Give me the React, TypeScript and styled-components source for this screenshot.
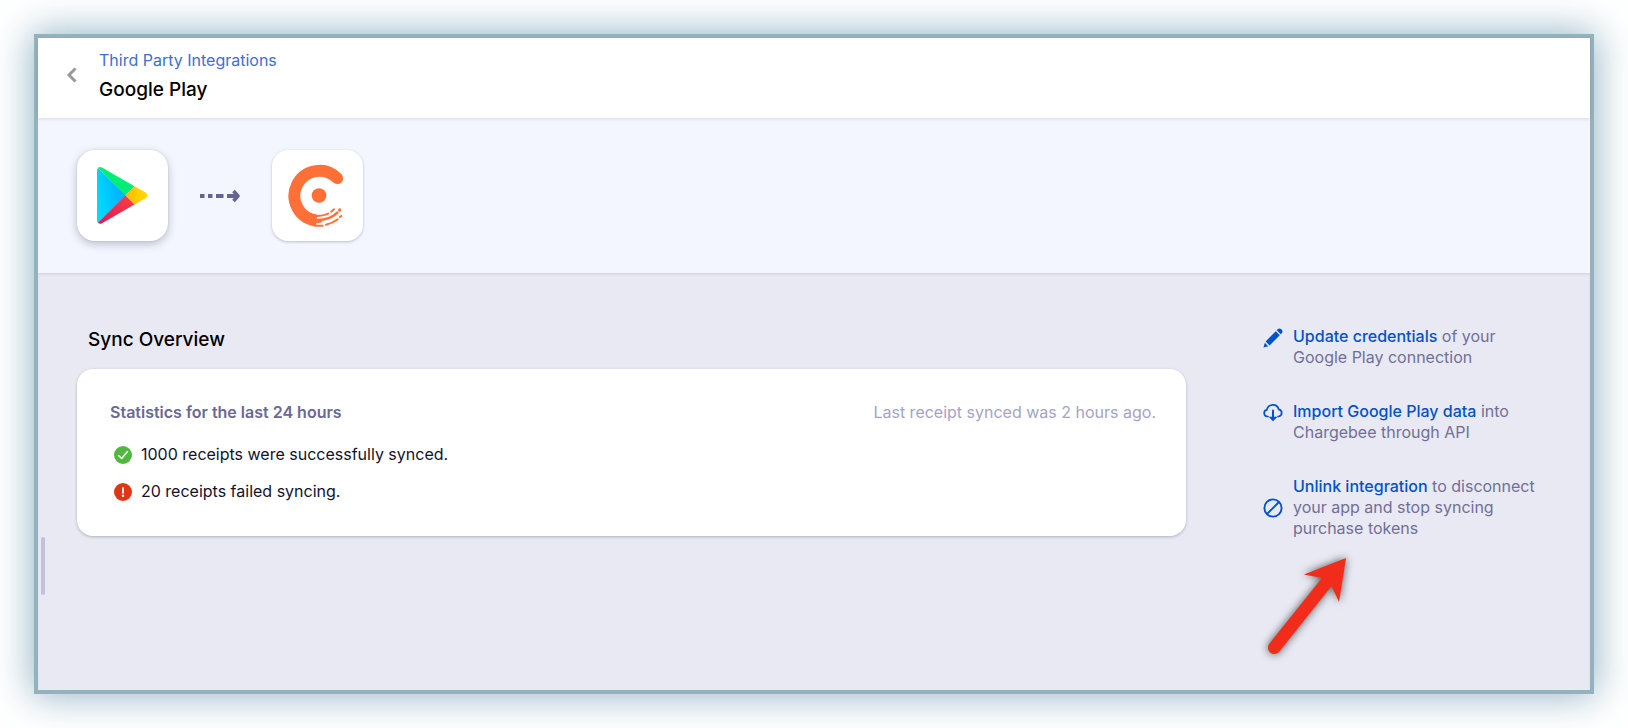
import React from "react";
import styled, { createGlobalStyle } from "styled-components";

const GlobalStyle = createGlobalStyle`
  * { box-sizing: border-box; }
  body {
    margin: 0;
    background: #fff;
    font-family: Inter, "Liberation Sans", sans-serif;
    font-size: 16px;
    color: #12122b;
  }
  h1, h2, h3, p, ul { margin: 0; padding: 0; }
  ul { list-style: none; }
  a { text-decoration: none; }
  svg { display: block; flex: none; }
`;

const Page = styled.div`
  display: flex;
  min-height: 100vh;
  padding: 34px;
`;

const Frame = styled.main`
  position: relative;
  flex: 1;
  display: flex;
  flex-direction: column;
  border: 4px solid #94b1bf;
  box-shadow: 0 0 36px 2px rgba(104, 148, 173, 0.7);
`;

const Header = styled.header`
  position: relative;
  display: flex;
  align-items: center;
  gap: 20px;
  height: 80px;
  padding: 0 28px 6px;
  background: #fff;
  box-shadow: 0 1px 3px rgba(60, 70, 100, 0.16);
`;

const BackButton = styled.button`
  display: flex;
  padding: 0;
  border: 0;
  background: none;
`;

const Titles = styled.div`
  display: flex;
  flex-direction: column;
  gap: 6px;
`;

const Crumb = styled.a`
  line-height: 24px;
  color: #426dd1;
`;

const Title = styled.h1`
  font-size: 19px;
  line-height: 24px;
  font-weight: 500;
  color: #000;
`;

const Banner = styled.section`
  display: flex;
  align-items: center;
  gap: 32px;
  height: 155px;
  padding: 0 39px;
  background: #f3f6fe;
`;

const LogoTile = styled.div<{ $raised?: boolean }>`
  display: flex;
  align-items: center;
  justify-content: center;
  width: 91px;
  height: 91px;
  border-radius: ${(p) => (p.$raised ? 18 : 16)}px;
  background: #fff;
  box-shadow: ${(p) =>
    p.$raised
      ? "0 3px 8px rgba(40, 45, 75, 0.28), 0 0 2px rgba(40, 45, 75, 0.12)"
      : "0 1px 3px rgba(40, 45, 75, 0.28)"};
`;

const Content = styled.div`
  flex: 1;
  display: flex;
  gap: 77px;
  padding: 53px 48px 40px 39px;
  background: #e9e9f3;
  box-shadow: inset 0 2px 3px -1px rgba(60, 60, 90, 0.14);
`;

const Overview = styled.section`
  flex: 1;
`;

const SectionTitle = styled.h2`
  padding: 2px 11px 17px;
  font-size: 19px;
  line-height: 24px;
  font-weight: 500;
  color: #000;
`;

const Card = styled.div`
  padding: 31px 30px 33px 33px;
  border-radius: 16px;
  background: #fff;
  box-shadow: 0 1px 3px rgba(50, 50, 90, 0.32);
`;

const CardHead = styled.div`
  display: flex;
  justify-content: space-between;
  margin-bottom: 19px;
  line-height: 24px;
`;

const CardTitle = styled.h3`
  font-size: 16px;
  font-weight: 600;
  color: #6a6894;
`;

const LastSync = styled.p`
  color: #a4a3c4;
`;

const Stats = styled.ul`
  display: flex;
  flex-direction: column;
  gap: 14px;
  padding-left: 4px;
`;

const Stat = styled.li`
  display: flex;
  align-items: center;
  gap: 9px;
  line-height: 23px;
`;

const Actions = styled.aside`
  display: flex;
  flex-direction: column;
  gap: 33px;
  width: 279px;
`;

const Action = styled.div<{ $top?: boolean }>`
  display: flex;
  align-items: ${(p) => (p.$top ? "flex-start" : "center")};
  gap: 10px;
  svg { margin-top: ${(p) => (p.$top ? 2 : 0)}px; }
`;

const ActionText = styled.p`
  line-height: 21px;
  color: #716f98;
`;

const ActionLink = styled.a`
  font-weight: 500;
  color: #0052cc;
`;

const ScrollThumb = styled.div`
  position: absolute;
  left: 3px;
  bottom: 95px;
  width: 4px;
  height: 58px;
  border-radius: 2px;
  background: #c3c1d8;
`;

const Pointer = styled.svg`
  position: absolute;
  right: 228px;
  bottom: 22px;
  filter: drop-shadow(0 0 4px rgba(0, 0, 0, 0.65));
`;

const PlayLogo = () => (
  <svg width="51" height="57" viewBox="97 167 51 57" role="img" aria-label="Google Play">
    <defs>
      <linearGradient id="blue" x1="1" y1="0.3" x2="0" y2="0.6">
        <stop offset="0" stopColor="#00a7ff" />
        <stop offset="1" stopColor="#00dcff" />
      </linearGradient>
      <linearGradient id="yellow" x1="1" y1="0" x2="0" y2="0">
        <stop offset="0" stopColor="#ffdc00" />
        <stop offset="1" stopColor="#ffb900" />
      </linearGradient>
      <linearGradient id="red" x1="1" y1="0" x2="0" y2="1">
        <stop offset="0" stopColor="#ff3d46" />
        <stop offset="1" stopColor="#d91b58" />
      </linearGradient>
    </defs>
    <path d="M98 168Q97 169 97 171V220Q97 222 98 223L126 195.500Z" fill="url(#blue)" />
    <path d="M98 168Q99.500 166.300 102 167.600L134.500 186.300L125.500 195.500Z" fill="#00ee76" />
    <path d="M134.500 186.300L145.500 192.600Q149.500 195.500 145.500 198.200L134.500 204.500L125.500 195.500Z" fill="url(#yellow)" />
    <path d="M98 222.800Q99.500 224.500 102 223.200L134.500 204.500L125.500 195.500Z" fill="url(#red)" />
  </svg>
);

const ChargebeeLogo = () => (
  <svg width="61" height="63" viewBox="287 164 61 63" role="img" aria-label="Chargebee" fill="none" stroke="#ff7038" strokeLinecap="round">
    <path d="M337.500 178.500A25 25 0 1 0 316.500 220.600" strokeWidth="11.800" strokeLinecap="butt" />
    <circle cx="337.500" cy="178.500" r="5.600" fill="#ff7038" stroke="none" />
    <circle cx="319" cy="195.500" r="7.300" fill="#ff7038" stroke="none" />
    <path d="M315 215.800Q322.500 216.300 328.300 213.600M331.200 211.800L334 209.200" strokeWidth="2" />
    <path d="M316 219.900Q329 220.600 337.300 212.600" strokeWidth="2.600" />
    <path d="M314 222Q318 222.500 321 221.500" strokeWidth="2" />
    <circle cx="339.700" cy="210" r="1.700" fill="#ff7038" stroke="none" />
    <path d="M314 225.500Q319 226 322.600 225.700M326 224.800Q333 223 337.700 219.300M340 217L341.300 215.900" strokeWidth="2" />
  </svg>
);

const DashedArrow = () => (
  <svg width="40" height="14" viewBox="0 0 40 14" fill="none" stroke="#666390" strokeWidth="4" aria-hidden="true">
    <path d="M0 7H4.500M8 7H12.500M16 7H23.500M27 7H37" />
    <path d="M33.500 2L38 7L33.500 12" strokeLinejoin="round" strokeWidth="3.500" />
  </svg>
);

export default function App() {
  return (
    <>
      <GlobalStyle />
      <Page>
        <Frame>
          <Header>
            <BackButton aria-label="Back">
              <svg width="13" height="16" viewBox="0 0 13 16" fill="none" stroke="#999" strokeWidth="3">
                <path d="M9.500 1.500L3 8L9.500 14.500" />
              </svg>
            </BackButton>
            <Titles>
              <Crumb href="#integrations">Third Party Integrations</Crumb>
              <Title>Google Play</Title>
            </Titles>
          </Header>
          <Banner>
            <LogoTile $raised>
              <PlayLogo />
            </LogoTile>
            <DashedArrow />
            <LogoTile>
              <ChargebeeLogo />
            </LogoTile>
          </Banner>
          <Content>
            <Overview>
              <SectionTitle>Sync Overview</SectionTitle>
              <Card>
                <CardHead>
                  <CardTitle>Statistics for the last 24 hours</CardTitle>
                  <LastSync>Last receipt synced was 2 hours ago.</LastSync>
                </CardHead>
                <Stats>
                  <Stat>
                    <svg width="18" height="18" viewBox="0 0 18 18" aria-hidden="true">
                      <circle cx="9" cy="9" r="9" fill="#4fb83d" />
                      <path d="M4.500 9.500L7.700 12.500L13.500 5.500" fill="none" stroke="#fff" strokeWidth="1.500" strokeLinecap="round" strokeLinejoin="round" />
                    </svg>
                    1000 receipts were successfully synced.
                  </Stat>
                  <Stat>
                    <svg width="18" height="18" viewBox="0 0 18 18" aria-hidden="true">
                      <circle cx="9" cy="9" r="9" fill="#e03616" />
                      <path d="M9 5V9.800" stroke="#fff" strokeWidth="1.800" strokeLinecap="round" />
                      <circle cx="9" cy="12.700" r="1.200" fill="#fff" />
                    </svg>
                    20 receipts failed syncing.
                  </Stat>
                </Stats>
              </Card>
            </Overview>
            <Actions>
              <Action $top>
                <svg width="20" height="20" viewBox="0 0 20 20" fill="#0052cc" aria-hidden="true">
                  <path d="M0.500 19.500L1.800 14.800L5.200 18.200ZM2.600 13.400L12.800 3.200L16.800 7.200L6.600 17.400ZM13.700 2.300L15 1Q16.500 0 18 1L19 2Q20 3.500 19 5L17.700 6.300Z" />
                </svg>
                <ActionText>
                  <ActionLink href="#credentials">Update credentials</ActionLink> of your Google Play connection
                </ActionText>
              </Action>
              <Action $top>
                <svg width="20" height="20" viewBox="0 0 20 20" fill="none" stroke="#0052cc" strokeWidth="1.700" strokeLinecap="round" aria-hidden="true">
                  <path d="M5 13.500H4.300A3.400 3.400 0 0 1 3.800 6.800A6.200 6.200 0 0 1 15.800 6.400A3.600 3.600 0 0 1 15.500 13.500H15" />
                  <path d="M10 7.500V15" strokeWidth="2" />
                  <path d="M7.500 14.500L10 17L12.500 14.500Z" fill="#0052cc" />
                </svg>
                <ActionText>
                  <ActionLink href="#import">Import Google Play data</ActionLink> into Chargebee through API
                </ActionText>
              </Action>
              <Action>
                <svg width="20" height="20" viewBox="0 0 20 20" fill="none" stroke="#0052cc" strokeWidth="1.900" aria-hidden="true">
                  <circle cx="10" cy="10" r="8.600" />
                  <path d="M4 16L16 4" />
                </svg>
                <ActionText>
                  <ActionLink href="#unlink">Unlink integration</ActionLink> to disconnect your app and stop syncing purchase tokens
                </ActionText>
              </Action>
            </Actions>
          </Content>
          <ScrollThumb />
          <Pointer width="100" height="120" viewBox="1262 548 100 120" aria-hidden="true">
            <path d="M1346 558L1304 574.500L1322 578L1269.500 643.500A6 6 0 0 0 1279 652L1331.500 586L1339 602Z" fill="#f22c1b" />
          </Pointer>
        </Frame>
      </Page>
    </>
  );
}
